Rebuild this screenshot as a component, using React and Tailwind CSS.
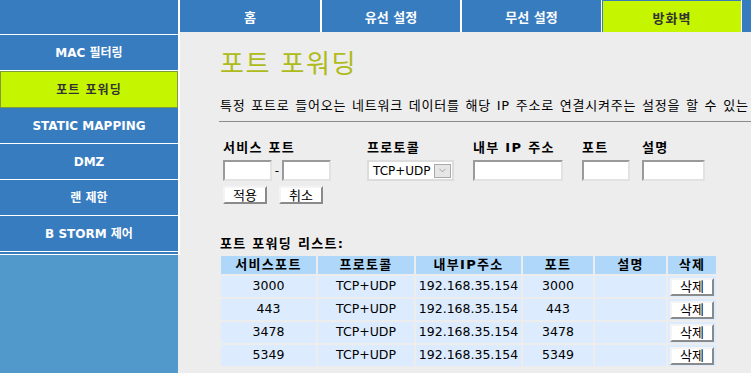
import { ChevronDown } from 'lucide-react';

const sideItems = [
  { label: 'MAC 필터링' },
  { label: '포트 포워딩', active: true },
  { label: 'STATIC MAPPING' },
  { label: 'DMZ' },
  { label: '랜 제한' },
  { label: 'B STORM 제어' },
];

const rows = [
  { port: '3000', proto: 'TCP+UDP', ip: '192.168.35.154', inPort: '3000' },
  { port: '443', proto: 'TCP+UDP', ip: '192.168.35.154', inPort: '443' },
  { port: '3478', proto: 'TCP+UDP', ip: '192.168.35.154', inPort: '3478' },
  { port: '5349', proto: 'TCP+UDP', ip: '192.168.35.154', inPort: '5349' },
];

const inputCls =
  'h-[21px] bg-white border-2 border-t-[#9a9a9a] border-l-[#9a9a9a] border-b-[#e2e2e2] border-r-[#e2e2e2]';
const buttonCls =
  'flex items-center justify-center bg-white border-2 border-t-[#f4f4f4] border-l-[#f4f4f4] border-b-[#8a8a8a] border-r-[#8a8a8a] text-[13px] leading-none text-black';

function SideItem({ label, active }) {
  if (active) {
    return (
      <div className="h-[37px] border-b border-white">
        <div className="h-[37px] bg-[#c6f500] border border-[#7c9b3c] flex items-center justify-center text-[12px] font-bold text-[#333] tracking-[1px]">
          {label}
        </div>
      </div>
    );
  }
  return (
    <div className="h-[36px] border-b border-white bg-[#377cbf] flex items-center justify-center text-[12px] font-bold text-white">
      {label}
    </div>
  );
}

function Tab({ label, className }) {
  return (
    <div className={`h-[32px] flex items-center justify-center pt-[4px] text-[13px] font-bold ${className}`}>
      {label}
    </div>
  );
}

export default function App() {
  return (
    <div
      className="w-[751px] h-[373px] overflow-hidden flex bg-[#ededed] text-black"
      style={{ fontFamily: '"DejaVu Sans", "Noto Sans CJK KR", sans-serif' }}
    >
      {/* sidebar */}
      <div className="w-[180px] shrink-0 flex flex-col">
        <div className="border-r-2 border-white">
          <div className="h-[35px] bg-[#377cbf] border-b border-white" />
          {sideItems.map((it) => (
            <SideItem key={it.label} {...it} />
          ))}
          <div className="h-[3px] bg-[#377cbf] border-b border-white" />
        </div>
        <div className="w-[178px] flex-1 bg-[#5299cb]" />
      </div>

      {/* main */}
      <div className="flex-1 min-w-0 flex flex-col">
        <div className="h-[32px] flex bg-white">
          <Tab label="홈" className="w-[140px] bg-[#377cbf] text-white" />
          <Tab label="유선 설정" className="w-[138px] ml-[2px] bg-[#377cbf] text-white" />
          <Tab label="무선 설정" className="w-[139px] ml-[2px] bg-[#377cbf] text-white" />
          <Tab
            label="방화벽"
            className="w-[139px] ml-[1px] bg-[#c6f500] text-[#333] border-t border-l border-[#377cbf] tracking-[1px]"
          />
          <div className="flex-1 ml-[1px] bg-[#377cbf]" />
        </div>

        <div className="pl-[40px] flex flex-col">
          <div className="mt-[17px] h-[30px] leading-[30px] text-[26px] text-[#aebb1a] tracking-[1.5px] whitespace-nowrap">
            포트 포워딩
          </div>
          <div className="mt-[19px] h-[16px] leading-[16px] text-[13px] whitespace-nowrap tracking-[0.75px] [word-spacing:1px]">
            특정 포트로 들어오는 네트워크 데이터를 해당 IP 주소로 연결시켜주는 설정을 할 수 있는
          </div>
          <div className="mt-[7px] -ml-[1px] border-t border-[#8c8c8c]" />

          {/* form */}
          <div className="mt-[18px] flex">
            <div className="ml-[3px] w-[108px] flex flex-col">
              <div className="h-[16px] leading-[16px] text-[13px] font-bold tracking-[1.3px] whitespace-nowrap">서비스 포트</div>
              <div className="mt-[4px] flex items-center">
                <div className={`w-[49px] ${inputCls}`} />
                <span className="w-[10px] text-center text-[12px] leading-none">-</span>
                <div className={`w-[49px] ${inputCls}`} />
              </div>
              <div className="mt-[5px] flex gap-[12px]">
                <div className={`w-[44px] h-[18px] ${buttonCls}`}>적용</div>
                <div className={`w-[44px] h-[18px] ${buttonCls}`}>취소</div>
              </div>
            </div>

            <div className="ml-[36px] w-[87px] flex flex-col">
              <div className="h-[16px] leading-[16px] text-[13px] font-bold tracking-[1.3px] whitespace-nowrap">프로토콜</div>
              <div className="mt-[4px] h-[21px] bg-white border-2 border-[#dcdcdc] flex items-center pl-[4px] pr-[1px]">
                <span className="flex-1 text-[12px] leading-none">TCP+UDP</span>
                <div className="w-[17px] h-[14px] bg-[#e6e6e6] border border-[#a9a9a9] flex items-center justify-center">
                  <ChevronDown size={11} strokeWidth={1.3} className="text-[#777]" />
                </div>
              </div>
            </div>

            <div className="ml-[19px] w-[90px] flex flex-col">
              <div className="h-[16px] leading-[16px] text-[13px] font-bold tracking-[1.3px] whitespace-nowrap">내부 IP 주소</div>
              <div className={`mt-[4px] w-[90px] ${inputCls}`} />
            </div>

            <div className="ml-[19px] w-[48px] flex flex-col">
              <div className="h-[16px] leading-[16px] text-[13px] font-bold tracking-[1.3px] whitespace-nowrap">포트</div>
              <div className={`mt-[4px] w-[48px] ${inputCls}`} />
            </div>

            <div className="ml-[12px] w-[63px] flex flex-col">
              <div className="h-[16px] leading-[16px] text-[13px] font-bold tracking-[1.3px] whitespace-nowrap">설명</div>
              <div className={`mt-[4px] w-[63px] ${inputCls}`} />
            </div>
          </div>

          {/* list */}
          <div className="mt-[32px] h-[16px] leading-[16px] text-[13px] font-bold tracking-[1.3px] whitespace-nowrap">
            포트 포워딩 리스트:
          </div>
          <div className="mt-[4px] ml-[1px] grid grid-cols-[95px_96px_105px_70px_71px_48px] gap-[2px] text-[12.5px]">
            {['서비스포트', '프로토콜', '내부IP주소', '포트', '설명', '삭제'].map((h) => (
              <div
                key={h}
                className="h-[18px] bg-[#afd7fa] flex items-center justify-center text-[13px] font-bold tracking-[1.3px]"
              >
                {h}
              </div>
            ))}
            {rows.map((r) => [
              <div key={r.port + 'a'} className="h-[21px] bg-[#dcebfd] flex items-center justify-center">{r.port}</div>,
              <div key={r.port + 'b'} className="h-[21px] bg-[#dcebfd] flex items-center justify-center">{r.proto}</div>,
              <div key={r.port + 'c'} className="h-[21px] bg-[#dcebfd] flex items-center justify-center">{r.ip}</div>,
              <div key={r.port + 'd'} className="h-[21px] bg-[#dcebfd] flex items-center justify-center">{r.inPort}</div>,
              <div key={r.port + 'e'} className="h-[21px] bg-[#dcebfd]" />,
              <div key={r.port + 'f'} className="h-[21px] bg-[#dcebfd] flex items-center justify-center">
                <div className={`w-[44px] h-[18px] ${buttonCls}`}>삭제</div>
              </div>,
            ])}
          </div>
        </div>
      </div>
    </div>
  );
}
